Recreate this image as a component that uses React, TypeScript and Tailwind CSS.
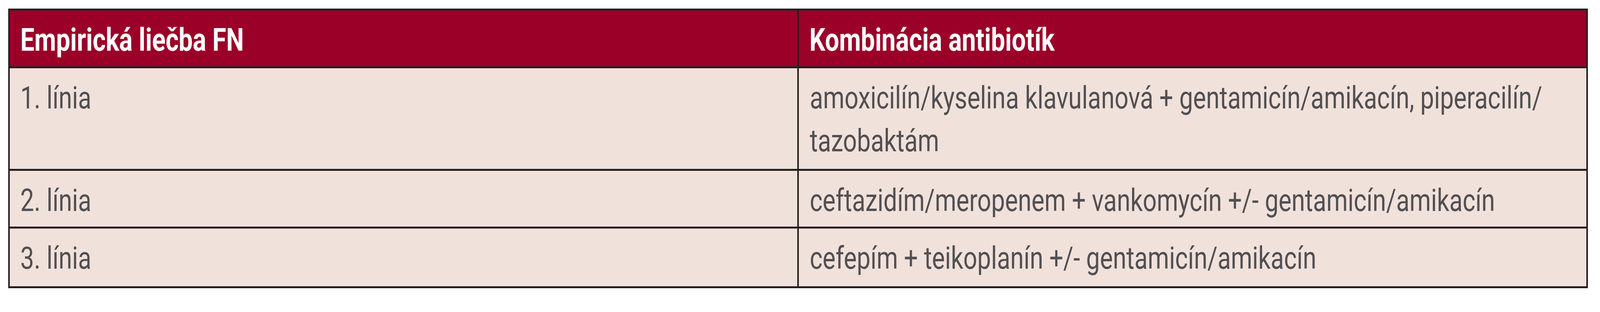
import React from "react";

const rows: { left: string; right: string[]; h: string }[] = [
  {
    left: "1. línia",
    right: [
      "amoxicilín/kyselina klavulanová + gentamicín/amikacín, piperacilín/",
      "tazobaktám",
    ],
    h: "h-[263px] border-b-[5px]",
  },
  {
    left: "2. línia",
    right: ["ceftazidím/meropenem + vankomycín +/- gentamicín/amikacín"],
    h: "h-[148px] border-b-[5px]",
  },
  {
    left: "3. línia",
    right: ["cefepím + teikoplanín +/- gentamicín/amikacín"],
    h: "h-[148px]",
  },
];

function Txt({ children }: { children: React.ReactNode }) {
  return (
    <span className="inline-block origin-left scale-x-[0.7827] whitespace-nowrap">
      {children}
    </span>
  );
}

export default function App() {
  return (
    <div
      className="w-full h-[800px] overflow-hidden bg-white pl-[21px] pt-[22px]"
      style={{ fontFamily: "Roboto, 'Open Sans', sans-serif" }}
    >
      <div className="w-[4044px] border-x-4 border-y-[5px] border-[#231f20]">
        <div className="grid grid-cols-[2020px_1fr] h-[148px] bg-[#9b0029] text-white font-bold text-[82px] leading-[100px] border-b-[5px] border-[#231f20]">
          <div className="pl-[27px] pt-[25px] border-r-4 border-[#231f20]">
            <Txt>Empirická liečba FN</Txt>
          </div>
          <div className="pl-[27px] pt-[25px]">
            <Txt>Kombinácia antibiotík</Txt>
          </div>
        </div>
        {rows.map((r, i) => (
          <div
            key={i}
            className={`grid grid-cols-[2020px_1fr] ${r.h} border-[#231f20] bg-[#f1e1db] text-[#515052] text-[80px] leading-[110px]`}
          >
            <div className="pl-[27px] pt-[21px] border-r-4 border-[#231f20]">
              <Txt>{r.left}</Txt>
            </div>
            <div className="pl-[28px] pt-[21px]">
              {r.right.map((l, j) => (
                <div key={j}>
                  <Txt>{l}</Txt>
                </div>
              ))}
            </div>
          </div>
        ))}
      </div>
    </div>
  );
}
